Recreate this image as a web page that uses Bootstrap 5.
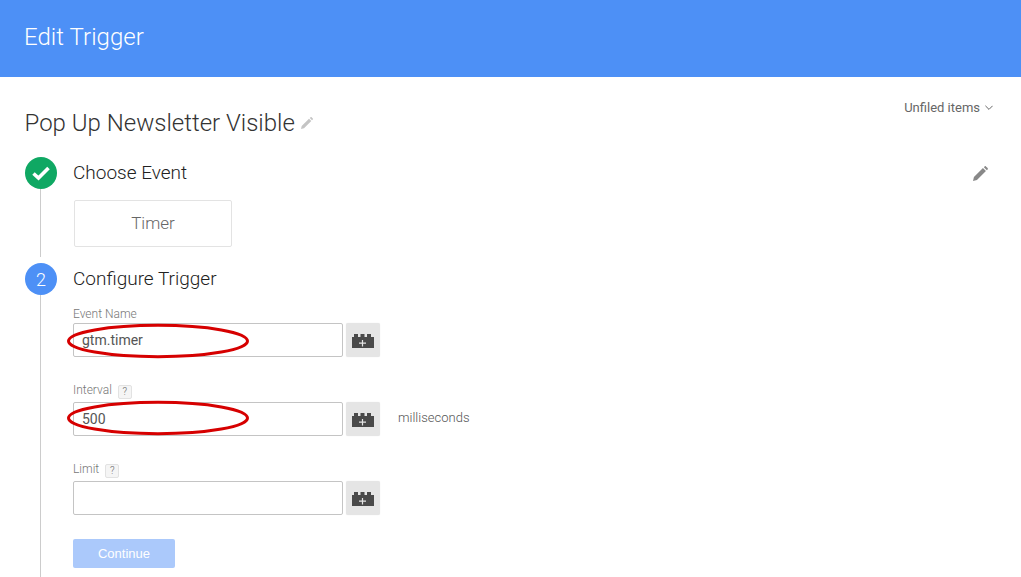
<!DOCTYPE html>
<html lang="en">
<head>
    <meta charset="UTF-8" />
    <title>Edit Trigger</title>
    <link href="https://cdn.jsdelivr.net/npm/bootstrap@5.3.3/dist/css/bootstrap.min.css" rel="stylesheet">
    <style>
        html, body { height: 577px; overflow: hidden; }
        body { font-family: Roboto, "Liberation Sans", sans-serif; color: #333; background: #fff; }
        .top-bar { height: 77px; background: #4d90f6; color: #fff; padding: 0 0 3px 24px; font-size: 24px; font-weight: 300; letter-spacing: .05px; }
        .page-body { padding: 0 26px 0 25px; }
        .name-row { height: 80px; }
        .trigger-name { font-size: 24px; font-weight: 300; line-height: 28px; margin: 32px 0 0; color: #333; text-indent: -.5px; }
        .name-pencil { margin: 40px 0 0 6px; }
        .folder-pick { font-size: 13px; color: #666; margin: 23px 2px 0 0; line-height: 16px; font-weight: 400; }
        .folder-chev { margin-left: 5px; }
        .step-head { height: 32px; }
        .step-dot { width: 32px; height: 32px; border-radius: 50%; color: #fff; font-size: 18px; font-weight: 300; flex: none; }
        .dot-done { background: #0fa863; }
        .dot-now { background: #4d90f6; }
        .step-title { font-size: 19px; font-weight: 300; margin-left: 16px; color: #222; line-height: 32px; }
        .step-body { margin-left: 15px; border-left: 1px solid #ccc; padding-left: 32px; }
        .body-one { height: 68px; padding-top: 11px; margin-bottom: 6px; }
        .event-box { width: 158px; height: 47px; margin-left: 1px; border: 1px solid #e3e3e3; border-radius: 2px; font-size: 17px; font-weight: 300; color: #666; }
        .body-two { height: 290px; padding-top: 12px; }
        .field-block { height: 79px; display: flow-root; }
        .field-label { font-size: 12px; font-weight: 300; color: #777; line-height: 14px; height: 14px; }
        .label-tip { height: 17px; margin-top: -3px; gap: 6px; }
        .help-mark { width: 14px; height: 14px; border: 1px solid #e2e2e2; background: #f5f5f5; border-radius: 2px; font-size: 10px; color: #666; line-height: 12px; text-align: center; margin-top: 2px; }
        .field-wrap { position: relative; width: 270px; height: 34px; margin-top: 2px; }
        .field-input { width: 270px; height: 34px; border: 1px solid #c4c4c4; border-radius: 2px; padding: 0 8px; font-size: 14px; color: #555; font-family: inherit; display: block; outline: 0; background: #fff; }
        .ring-mark { position: absolute; left: -6px; width: 184px; height: 36px; overflow: visible; pointer-events: none; }
        .ring-low { top: 0; }
        .ring-high { top: -2px; }
        .var-btn { width: 34px; height: 34px; margin-left: 3px; margin-top: 2px; background: #e5e5e5; border: 0; border-radius: 2px; padding: 0; flex: none; box-shadow: 0 0 1px rgba(0,0,0,.12); }
        .unit-text { font-size: 13px; font-weight: 300; color: #555; margin-left: 18px; margin-top: 1px; height: 34px; }
        .go-btn { width: 102px; height: 29px; margin-top: -5px; background: #abc9fb; color: #fff; border: 0; border-radius: 2px; font-size: 13px; font-family: "Liberation Sans", sans-serif; padding: 0; }
        .edit-pencil { margin-right: 7px; }
    </style>
</head>
<body>
    <!-- Header -->
    <div class="top-bar d-flex align-items-center">Edit Trigger</div>

    <div class="page-body">
        <div class="name-row d-flex align-items-start">
            <h1 class="trigger-name">Pop Up Newsletter Visible</h1>
            <svg class="name-pencil" width="12" height="12" viewBox="0 0 12 12"><path fill="#c4c4c4" d="M0 12l.7-3L8 1.700l2.300 2.300L3 11.300zM8.800 1l.8-.8c.3-.3.700-.3 1 0l1.200 1.200c.3.300.3.700 0 1l-.8.800z"/></svg>
            <div class="folder-pick ms-auto d-flex align-items-center">
                Unfiled items
                <svg class="folder-chev" width="8" height="6" viewBox="0 0 8 6"><path d="M.4 .8L4 4.400L7.600 .8" fill="none" stroke="#666" stroke-width="1"/></svg>
            </div>
        </div>

        <!-- Step 1 -->
        <div class="step-head d-flex align-items-center">
            <div class="step-dot dot-done d-flex align-items-center justify-content-center">
                <svg width="20" height="16" viewBox="0 0 20 16"><path d="M2.500 8.500L7.500 13L17.500 3" fill="none" stroke="#fff" stroke-width="3.600"/></svg>
            </div>
            <div class="step-title">Choose Event</div>
            <svg class="edit-pencil ms-auto" width="15" height="15" viewBox="0 0 16 16"><path fill="#888" d="M0 16l1-4.200L10.600 2.200l3.200 3.200L4.200 15zM11.600 1.200l.8-.8c.4-.4 1-.4 1.400 0l1.800 1.800c.4.4.4 1 0 1.400l-.8.800z"/></svg>
        </div>
        <div class="step-body body-one">
            <div class="event-box d-flex align-items-center justify-content-center">Timer</div>
        </div>

        <!-- Step 2 -->
        <div class="step-head d-flex align-items-center">
            <div class="step-dot dot-now d-flex align-items-center justify-content-center">2</div>
            <div class="step-title">Configure Trigger</div>
        </div>
        <div class="step-body body-two">
            <div class="field-block">
                <div class="field-label d-flex">Event Name</div>
                <div class="d-flex">
                    <div class="field-wrap">
                        <input class="field-input" type="text" value="gtm.timer">
                        <svg class="ring-mark ring-low" viewBox="0 0 184 36"><ellipse cx="91" cy="18" rx="89.500" ry="15.700" fill="none" stroke="#d60000" stroke-width="3"/></svg>
                    </div>
                    <button class="var-btn" type="button">
                        <svg width="22" height="14" viewBox="0 0 22 14"><path fill="#4a4a4a" d="M0 3h2V0h4v3h2.500V0h4v3H15V0h4v3h3v11H0z"/><path d="M10.500 6v6.500M7 9.200h7" stroke="#e5e5e5" stroke-width="1.200"/></svg>
                    </button>
                </div>
            </div>
            <div class="field-block">
                <div class="field-label label-tip d-flex">Interval <span class="help-mark">?</span></div>
                <div class="d-flex">
                    <div class="field-wrap">
                        <input class="field-input" type="text" value="500">
                        <svg class="ring-mark ring-high" viewBox="0 0 184 36"><ellipse cx="91" cy="18" rx="89.500" ry="15.700" fill="none" stroke="#d60000" stroke-width="3"/></svg>
                    </div>
                    <button class="var-btn" type="button">
                        <svg width="22" height="14" viewBox="0 0 22 14"><path fill="#4a4a4a" d="M0 3h2V0h4v3h2.500V0h4v3H15V0h4v3h3v11H0z"/><path d="M10.500 6v6.500M7 9.200h7" stroke="#e5e5e5" stroke-width="1.200"/></svg>
                    </button>
                    <div class="unit-text d-flex align-items-center">milliseconds</div>
                </div>
            </div>
            <div class="field-block">
                <div class="field-label label-tip d-flex">Limit <span class="help-mark">?</span></div>
                <div class="d-flex">
                    <div class="field-wrap">
                        <input class="field-input" type="text">
                    </div>
                    <button class="var-btn" type="button">
                        <svg width="22" height="14" viewBox="0 0 22 14"><path fill="#4a4a4a" d="M0 3h2V0h4v3h2.500V0h4v3H15V0h4v3h3v11H0z"/><path d="M10.500 6v6.500M7 9.200h7" stroke="#e5e5e5" stroke-width="1.200"/></svg>
                    </button>
                </div>
            </div>
            <button class="go-btn d-block" type="button">Continue</button>
        </div>
    </div>

    <script src="https://cdn.jsdelivr.net/npm/bootstrap@5.3.3/dist/js/bootstrap.bundle.min.js"></script>
</body>
</html>
